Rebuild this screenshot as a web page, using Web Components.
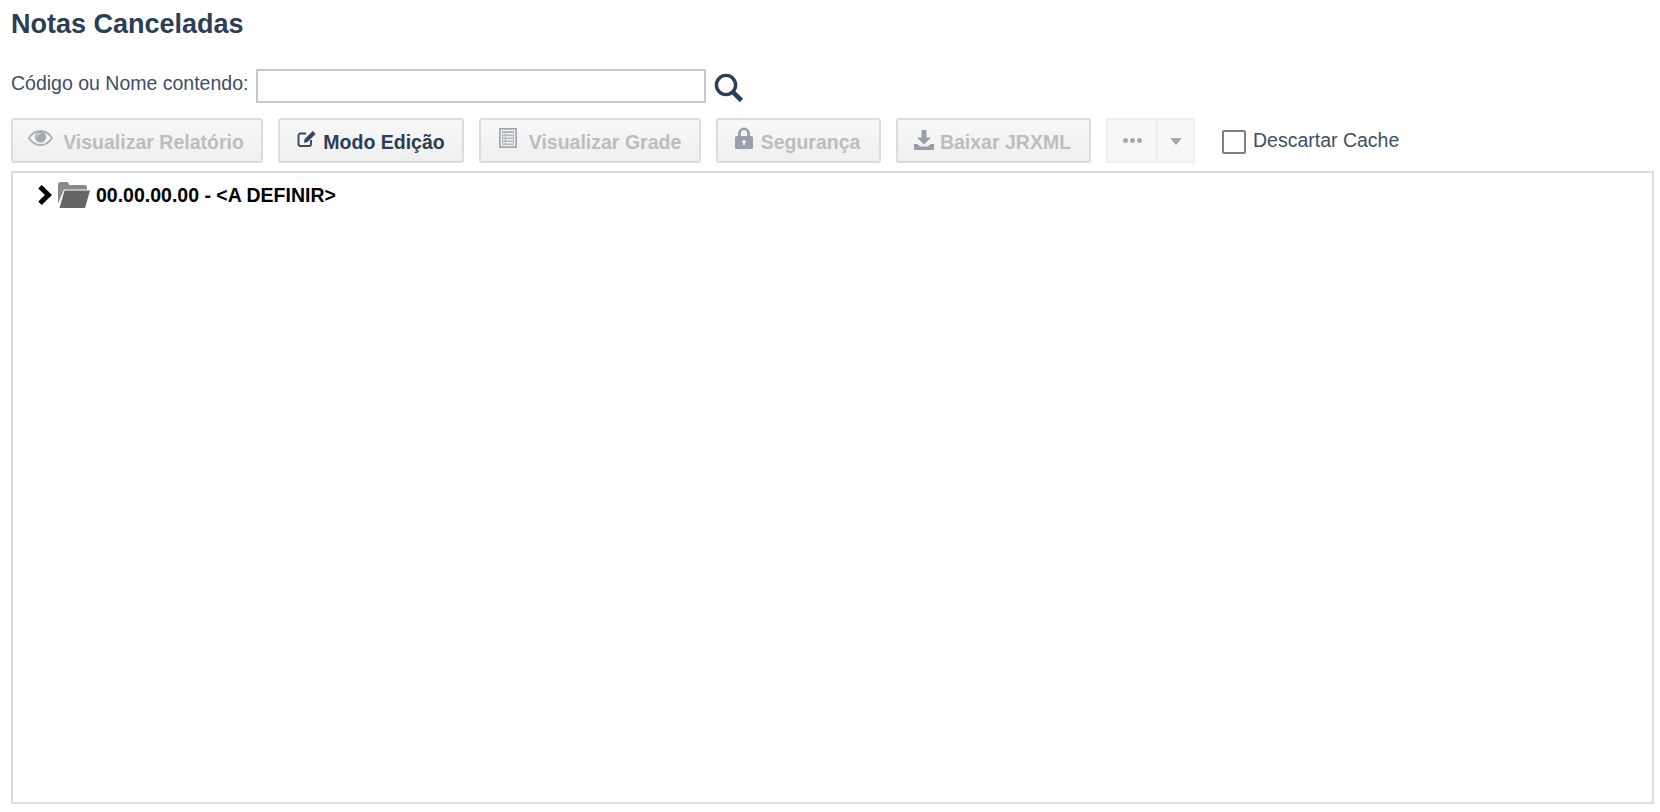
<!DOCTYPE html>
<html lang="pt">
<head>
<meta charset="utf-8">
<title>Notas Canceladas</title>
<style>
  html, body { margin: 0; padding: 0; background: #fff; }
  body { font-family: "Liberation Sans", Arial, sans-serif; color: #3d4f66; }
</style>
</head>
<body>
<report-page></report-page>

<script>
const ICONS = {
  eye: `<svg width="25" height="16" viewBox="0 0 25 16"><path fill="none" stroke="#a8aeb8" stroke-width="1.800" d="M1 8c2.500-4 6.500-7 11.500-7S21.500 4 24 8c-2.500 4-6.500 7-11.500 7S3.500 12 1 8z"/><circle cx="12.500" cy="7" r="5.500" fill="#a3a9b3"/><path fill="none" stroke="#d5d8dd" stroke-width="1.200" d="M8.800 6.500a3.800 3.800 0 0 1 3.700-3"/></svg>`,
  edit: `<svg width="19" height="16" viewBox="0 0 19 16"><path fill="none" stroke="#34495e" stroke-width="1.900" d="M9 2.500H3.500a2 2 0 0 0-2 2v8.500a2 2 0 0 0 2 2H12a2 2 0 0 0 2-2V9"/><path fill="#34495e" d="M15.800 0l2.900 2.900-8.200 8.100-3.700.8.800-3.700z"/></svg>`,
  list: `<svg width="18" height="20" viewBox="0 0 18 20"><path fill="#a3a9b3" fill-rule="evenodd" d="M0 0h18v20H0zm1.800 1.800v16.400h14.400V1.800z"/><path fill="#b4b9c1" d="M3 3h12v14H3z"/><path fill="#fff" opacity=".75" d="M3.800 5h2v1.500h-2zm3 0h7.400v1.500H6.800zm-3 3h2v1.500h-2zm3 0h7.400v1.500H6.800zm-3 3h2v1.500h-2zm3 0h7.400v1.500H6.800zm-3 3h2v1.500h-2zm3 0h7.400v1.500H6.800z"/></svg>`,
  lock: `<svg width="18" height="22" viewBox="0 0 18 22"><path fill="#989fab" fill-rule="evenodd" d="M3 9V6.500a6 6 0 0 1 12 0V9h1.500A1.500 1.500 0 0 1 18 10.500v10a1.500 1.500 0 0 1-1.500 1.500h-15A1.500 1.500 0 0 1 0 20.500v-10A1.500 1.500 0 0 1 1.500 9zm2.800 0h6.400V6.500a3.200 3.200 0 0 0-6.400 0zM9 13a1.800 1.800 0 0 0-1 3.300V18h2v-1.700A1.800 1.800 0 0 0 9 13z"/></svg>`,
  download: `<svg width="20" height="20" viewBox="0 0 20 20"><path fill="#989fab" d="M7.500 0h5v7.500h4.500L10 14.500 3 7.500h4.500zM0 14h3l3.500 2.500h7L17 14h3v6H0z"/></svg>`,
  search: `<svg width="30" height="30" viewBox="0 0 30 30"><circle cx="12" cy="12" r="9.600" fill="none" stroke="#2c3e56" stroke-width="3.400"/><path stroke="#2c3e56" stroke-width="4.600" d="M18.800 18.800L27.500 27.500"/></svg>`,
  chevron: `<svg width="15" height="20" viewBox="0 0 15 20"><path fill="none" stroke="#000" stroke-width="5" d="M3 1.800l8.500 8.200-8.500 8.200"/></svg>`,
  folder: `<svg width="32" height="26" viewBox="0 0 32 26"><path fill="#8a8a8a" d="M0 2.500A2.500 2.500 0 0 1 2.500 0h6A2.500 2.500 0 0 1 11 2.500V3h15.500A2.500 2.500 0 0 1 29 5.500V7.500H6L2 17 0 22z"/><path fill="#666" d="M6.500 8.500H32L27 26H1.500z"/></svg>`
};

class ToolButton extends HTMLElement {
  connectedCallback() {
    const icon = ICONS[this.getAttribute("icon")] || "";
    this.attachShadow({ mode: "open" }).innerHTML = `
      <style>
        :host {
          display: inline-flex;
          box-sizing: border-box;
          height: 45px;
          padding-top: 3px;
          align-items: center;
          justify-content: center;
          gap: var(--gap, 7px);
          border: 2px solid #dcdcdc;
          border-radius: 3px;
          background: linear-gradient(#f8f8f8, #efefef);
          font: bold 19.500px "Liberation Sans", Arial, sans-serif;
          color: #bdbdbd;
          white-space: nowrap;
        }
        :host([active]) { color: #2c3e56; }
        .icon { display: flex; position: relative; top: var(--icon-top, -4px); }
      </style>
      <span class="icon">${icon}</span><slot></slot>`;
  }
}

class SplitButton extends HTMLElement {
  connectedCallback() {
    this.attachShadow({ mode: "open" }).innerHTML = `
      <style>
        :host {
          display: inline-flex;
          box-sizing: border-box;
          width: 89px;
          height: 45px;
          border: 2px solid #eeeeee;
          background: #f8f8f8;
        }
        div { display: flex; align-items: center; justify-content: center; }
        .more { width: 48px; border-right: 2px solid #eeeeee; gap: 2px; }
        .more i { width: 5px; height: 5px; border-radius: 50%; background: #a3a9b3; }
        .caret { flex: 1; }
        .caret i { border: 6.500px solid transparent; border-top: 7px solid #a3a9b3; border-bottom: 0; margin-top: 2px; }
      </style>
      <div class="more"><i></i><i></i><i></i></div>
      <div class="caret"><i></i></div>`;
  }
}

class CheckOption extends HTMLElement {
  connectedCallback() {
    this.attachShadow({ mode: "open" }).innerHTML = `
      <style>
        :host {
          display: inline-flex;
          align-items: center;
          gap: 7px;
          font-size: 19.500px;
          color: #3d4f66;
        }
        .box {
          box-sizing: border-box;
          width: 24px;
          height: 24px;
          margin-top: 2px;
          border: 2px solid #7f7f7f;
          border-radius: 2px;
          background: #fff;
        }
      </style>
      <span class="box"></span><span class="text"><slot></slot></span>`;
  }
}

class TreeNode extends HTMLElement {
  connectedCallback() {
    this.attachShadow({ mode: "open" }).innerHTML = `
      <style>
        :host {
          display: flex;
          align-items: center;
          height: 26px;
          font: bold 19.500px "Liberation Sans", Arial, sans-serif;
          color: #000;
        }
        .chevron { display: flex; margin-right: 6px; }
        .folder { display: flex; margin-right: 6px; }
      </style>
      <span class="chevron">${ICONS.chevron}</span>
      <span class="folder">${ICONS.folder}</span>
      <slot></slot>`;
  }
}

class ReportPage extends HTMLElement {
  connectedCallback() {
    this.attachShadow({ mode: "open" }).innerHTML = `
      <style>
        :host {
          display: flex;
          flex-direction: column;
          box-sizing: border-box;
          height: 812px;
          padding: 0 6px 8px 11px;
          font-family: "Liberation Sans", Arial, sans-serif;
          color: #3d4f66;
        }
        h1 {
          margin: 9px 0 0;
          font-size: 27px;
          line-height: 30px;
          color: #2c3e56;
        }
        .search {
          display: flex;
          align-items: center;
          height: 36px;
          margin-top: 29px;
          font-size: 19.500px;
        }
        .search label { position: relative; top: -3px; margin-right: 7.600px; }
        .search .field {
          box-sizing: border-box;
          width: 450px;
          height: 34px;
          border: 2px solid #c8c8c8;
          margin-right: 8px;
        }
        .search svg { display: block; position: relative; top: 2px; }
        .toolbar {
          display: flex;
          align-items: center;
          gap: 15px;
          margin-top: 14px;
        }
        .toolbar check-option { margin-left: 12px; }
        .tree {
          flex: 1;
          box-sizing: border-box;
          margin-top: 8px;
          border: 2px solid #dddddd;
          padding: 9px 24px;
        }
      </style>
      <h1>Notas Canceladas</h1>
      <div class="search">
        <label>Código ou Nome contendo:</label>
        <div class="field"></div>
        ${ICONS.search}
      </div>
      <div class="toolbar">
        <tool-button icon="eye" style="width:252px;--gap:10px;padding-right:2px">Visualizar Relatório</tool-button>
        <tool-button icon="edit" active style="width:186px;--icon-top:-3px">Modo Edição</tool-button>
        <tool-button icon="list" style="width:222px;--gap:12px">Visualizar Grade</tool-button>
        <tool-button icon="lock" style="width:165px;--gap:8px;padding-right:2px">Segurança</tool-button>
        <tool-button icon="download" style="width:195px;--gap:6px;--icon-top:-2px;padding-right:2px">Baixar JRXML</tool-button>
        <split-button></split-button>
        <check-option>Descartar Cache</check-option>
      </div>
      <div class="tree">
        <tree-node>00.00.00.00 - &lt;A DEFINIR&gt;</tree-node>
      </div>`;
  }
}

customElements.define("tool-button", ToolButton);
customElements.define("split-button", SplitButton);
customElements.define("check-option", CheckOption);
customElements.define("tree-node", TreeNode);
customElements.define("report-page", ReportPage);
</script>
</body>
</html>
